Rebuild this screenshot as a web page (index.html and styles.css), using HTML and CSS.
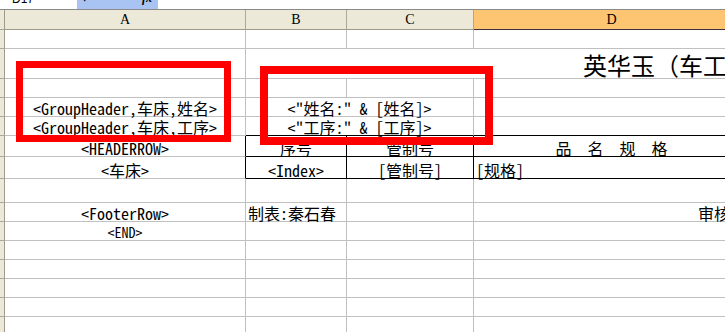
FILE: index.html
```html
<!DOCTYPE html>
<html>
<head>
<meta charset="utf-8">
<link rel="stylesheet" href="styles.css">
</head>
<body>
<div class="app">
  <div class="fbar">
    <div class="namebox"><span>D17</span></div>
    <div class="fxzone"><span class="arrow">▼</span><span class="fx">fx</span></div>
    <div class="formula"></div>
  </div>
  <div class="sheet">
    <div class="rh"></div><div class="ch">A</div><div class="ch">B</div><div class="ch">C</div><div class="ch sel">D</div>

    <div class="rh"></div><div class="c"></div><div class="c"></div><div class="c"></div><div class="c"></div>

    <div class="rh"></div><div class="c"></div><div class="c title span3"><span>英华玉（车工</span></div>

    <div class="rh"></div><div class="c"></div><div class="c"></div><div class="c"></div><div class="c"></div>

    <div class="rh"></div><div class="c mid">&lt;GroupHeader,车床,姓名&gt;</div><div class="c mid span2">&lt;"姓名:" &amp; [姓名]&gt;</div><div class="c"></div>

    <div class="rh"></div><div class="c mid">&lt;GroupHeader,车床,工序&gt;</div><div class="c mid span2 tbot">&lt;"工序:" &amp; [工序]&gt;</div><div class="c tbot"></div>

    <div class="rh"></div><div class="c mid tleft">&lt;HEADERROW&gt;</div><div class="c mid t">序号</div><div class="c mid t">管制号</div><div class="c mid t">品　名　规　格</div>

    <div class="rh"></div><div class="c mid tleft">&lt;车床&gt;</div><div class="c mid t">&lt;Index&gt;</div><div class="c mid t">[管制号]</div><div class="c t">[规格]</div>

    <div class="rh"></div><div class="c"></div><div class="c"></div><div class="c"></div><div class="c"></div>

    <div class="rh"></div><div class="c mid">&lt;FooterRow&gt;</div><div class="c">制表:秦石春</div><div class="c"></div><div class="c audit">审核:</div>

    <div class="rh"></div><div class="c mid small">&lt;END&gt;</div><div class="c"></div><div class="c"></div><div class="c"></div>

    <div class="rh"></div><div class="c"></div><div class="c"></div><div class="c"></div><div class="c"></div>
    <div class="rh"></div><div class="c"></div><div class="c"></div><div class="c"></div><div class="c"></div>
    <div class="rh"></div><div class="c"></div><div class="c"></div><div class="c"></div><div class="c"></div>
    <div class="rh"></div><div class="c"></div><div class="c"></div><div class="c"></div><div class="c"></div>
    <div class="rh"></div><div class="c"></div><div class="c"></div><div class="c"></div><div class="c"></div>
  </div>
  <div class="mark mark-a"></div>
  <div class="mark mark-b"></div>
</div>
</body>
</html>
```
FILE: styles.css
```css
* { box-sizing: border-box; }
html, body { margin: 0; padding: 0; }
body {
  width: 725px;
  height: 332px;
  overflow: hidden;
  background: #ffffff;
  font-family: "Noto Sans Mono CJK SC", "Noto Sans CJK SC", "Liberation Mono", monospace;
  color: #000;
}
.app {
  position: relative;
  width: 725px;
  height: 332px;
  overflow: hidden;
}

/* formula bar remnant */
.fbar {
  display: flex;
  height: 10px;
  border-bottom: 1px solid #8a8a8a;
  overflow: hidden;
}
.namebox {
  width: 77px;
  background: #fff;
  padding-left: 12px;
}
.namebox span {
  display: block;
  font: 12px/12px "Liberation Sans", sans-serif;
  margin-top: -7px;
}
.fxzone {
  width: 81px;
  background: #a9c4f2;
  display: flex;
}
.arrow {
  display: block;
  font: 7px/7px "DejaVu Sans", sans-serif;
  margin-left: 5px;
  margin-top: -4px;
}
.fx {
  display: block;
  margin-left: auto;
  margin-right: 6px;
  font: italic bold 12px/12px "Liberation Serif", serif;
  margin-top: -8px;
}
.formula { flex: 1; background: #fff; }

/* sheet */
.sheet {
  display: grid;
  width: 750px;
  grid-template-columns: 5px 241px 101px 127px 276px;
  grid-template-rows: 20px 19px 30px 19px 19px 19px 21px 22px 24px 19px 19px 19px 19px 19px 19px 19px;
}
.rh {
  background: #ece9d8;
  border-right: 1px solid #9d9a8a;
  border-bottom: 1px solid #aca899;
}
.ch {
  background: #ece9d8;
  border-right: 1px solid #aca899;
  border-bottom: 1px solid #9d9a8a;
  display: flex;
  align-items: center;
  justify-content: center;
  font: 14px/14px "Liberation Serif", serif;
  padding-top: 1px;
}
.ch.sel {
  background: #fdc571;
  border-bottom: 1px solid #3e2f3f;
}
.c {
  border-right: 1px solid #c0c0c0;
  border-bottom: 1px solid #c0c0c0;
  display: flex;
  align-items: flex-end;
  justify-content: flex-start;
  padding: 0 2px;
  font-size: 16px;
  line-height: 16px;
  white-space: nowrap;
}
.c.mid { justify-content: center; }
.c.small { font-size: 14px; line-height: 15px; }
.span2 { grid-column: span 2; }
.span3 { grid-column: span 3; }
.title {
  font: 24px/26px "Noto Sans CJK SC", sans-serif;
  padding-left: 337px;
  overflow: hidden;
}
.audit { padding-left: 224px; }
.tbot { border-bottom-color: #000; }
.tleft { border-right-color: #000; }
.t { border-right-color: #000; border-bottom-color: #000; }

/* red annotation boxes drawn over the sheet */
.mark {
  position: absolute;
  border-style: solid;
  border-color: #ff0000;
}
.mark-a {
  left: 16px;
  top: 61px;
  width: 215px;
  height: 81px;
  border-width: 7px;
}
.mark-b {
  left: 260px;
  top: 66px;
  width: 233px;
  height: 79px;
  border-width: 8px;
}
```
